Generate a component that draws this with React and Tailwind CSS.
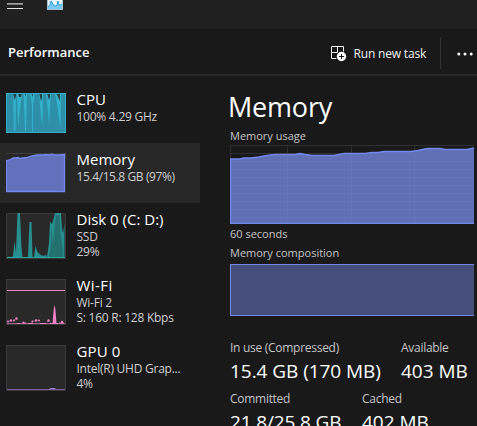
import React from "react";

function CpuGraph() {
  return (
    <svg width="60" height="40" viewBox="0 0 60 40" className="block">
      <rect width="60" height="40" fill="#2e90a8" />
      <path d="M7 0H10L9.500 38H8ZM11 0H16L13.500 20L12.500 34L11.500 20ZM17.500 0H21L20 38H19ZM24 0H29L27 12V39H26V12ZM33 0H37L36.500 34L35 24ZM40 0H45L43 31L42 20ZM49 0H55L54.500 36L53 26L51.500 14Z" fill="#33b0cb" />
      <path d="M7 0H10V3L8.500 7ZM12 0H16L15 4H13ZM18 0H20V3ZM25 0H27V4ZM33 0H36V5L35 8ZM41 0H44V4L43 7ZM50 0H54V8L52 4Z" fill="#24424a" />
      <rect x=".5" y=".5" width="59" height="39" fill="none" stroke="#35acc6" />
    </svg>
  );
}

function MemoryGraph() {
  return (
    <svg width="60" height="40" viewBox="0 0 60 40" className="block">
      <path d="M0 .5H59.500V5" fill="none" stroke="#3c3c3c" />
      <path d="M.5 38.500V7.500L4 7L7 5H10L12 4.500L14 5.500L17 5L21 4.500L26 3L31 2H38L40 1.500L43 2L46 1L48 2H53L58.500 1.500V38.500Z" fill="#6370bb" stroke="#7389f2" strokeWidth="1.300" />
    </svg>
  );
}

function DiskGraph() {
  return (
    <svg width="60" height="46" viewBox="0 0 60 46" className="block">
      <rect x=".5" y=".5" width="59" height="45" fill="#292929" stroke="#3a3a3a" />
      <path d="M1 45L3 43.500L5 44.500L7 43L8.500 28L10 40L11.500 0H14L15.500 35L16.500 44H22L23.500 9H25.500L26.500 44H28L29.500 33L31.500 39L35 42L38 43L40 41.500L41 44L43 30L44 9L46 11L48 4L49 0H55L56 16L57 20L58.500 10V45Z" fill="#25908f" />
      <path d="M43 44L45 30L45.500 14L47 32L49 8L50 2H53.500L54.500 20L57 38V44Z" fill="#24726f" />
      <path d="M1 44.500H59" stroke="#25a09d" />
    </svg>
  );
}

function WifiGraph() {
  return (
    <svg width="60" height="46" viewBox="0 0 60 46" className="block">
      <rect x=".5" y=".5" width="59" height="45" fill="#292929" stroke="#3a3a3a" />
      <path d="M1 11.500H59" stroke="#ee82c6" />
      <path d="M46.500 45L47.800 29L48.500 26L49.500 31L50.500 45Z" fill="#ee82c6" />
      <path d="M1 44.500H59" stroke="#a45c8a" />
      <path d="M11 44.500H14M16 44H20M22 44.500H27M34 44.500H40M44 44.500H52M53 44H58" fill="none" stroke="#ee82c6" />
      <path d="M1 42.500L5 41.500L9 41L10 39M25 43L29 41.500L33 41M41 43L43 41.500L45 44" fill="none" stroke="#a45c8a" strokeDasharray="1 1" />
      <g fill="#ee82c6">
        <circle cx="2" cy="42.500" r="1" />
        <circle cx="5" cy="41.500" r="1.200" />
        <circle cx="8" cy="41.500" r="1" />
        <circle cx="10.500" cy="39.500" r="1.200" />
        <circle cx="17.500" cy="43.500" r="1" />
        <circle cx="26.500" cy="42.500" r="1" />
        <circle cx="30" cy="41.500" r="1.200" />
        <circle cx="33" cy="41.500" r="1" />
        <circle cx="42.500" cy="41.500" r="1.200" />
        <circle cx="56" cy="43" r="1.200" />
      </g>
    </svg>
  );
}

function GpuGraph() {
  return (
    <svg width="60" height="46" viewBox="0 0 60 46" className="block">
      <rect x=".5" y=".5" width="59" height="45" fill="#292929" stroke="#3a3a3a" />
      <path d="M1 44.500H59" stroke="#7a5f9c" />
      <path d="M43 44.500L45 43.500H49L50 44.500" stroke="#a581d0" fill="none" />
    </svg>
  );
}

function Item({ graph, title, lines, selected, tall, titleClass = "", lineClass = "tracking-[-0.25px]" }) {
  return (
    <div className={`flex gap-[10.5px] pl-1.5 ${tall ? "h-[66px]" : "h-[60px]"} ${selected ? "bg-[#272727]" : ""}`}>
      <div className="shrink-0 pt-2.5">{graph}</div>
      <div className="whitespace-nowrap pt-1.5">
        <div className={`text-[15px] leading-5 text-white ${titleClass}`}>{title}</div>
        {lines.map((l) => (
          <div key={l} className={`text-[12px] leading-[15px] text-[#cfcfcf] ${lineClass}`}>{l}</div>
        ))}
      </div>
    </div>
  );
}

function Stat({ label, value, className = "", valueClass = "" }) {
  return (
    <div className={`shrink-0 whitespace-nowrap ${className}`}>
      <div className="text-[12px] leading-[15px] tracking-[-0.28px] text-[#c4c4c4]">{label}</div>
      <div className={`mt-[3px] text-[19px] leading-[26px] text-white ${valueClass}`}>{value}</div>
    </div>
  );
}

export default function App() {
  return (
    <div className="flex h-[426px] w-[477px] flex-col overflow-hidden bg-[#191919] font-['Open_Sans','Noto_Sans',sans-serif]">
      <header className="flex h-[29px] shrink-0 items-start bg-[#202020] pl-[7px]">
        <svg width="16" height="10" viewBox="0 0 16 10">
          <path d="M0 3.500H16" stroke="#a0a0a0" />
          <path d="M0 4.500H16" stroke="#777" />
          <path d="M0 8.500H16" stroke="#e4e4e4" />
        </svg>
        <svg width="16" height="10" viewBox="0 0 16 10" className="ml-6">
          <rect width="16" height="10" fill="#a9c3d2" />
          <rect x="1" width="14" height="9" fill="#e9f6fd" />
          <path d="M1 7L3 5L4 1L5 2L6 5L8 6L10 5.500L11 1L12 5L14 5L15 4V9H1Z" fill="#7cc9f6" />
          <path d="M1 7L3 5L4 1L5 2L6 5L8 6L10 5.500L11 1L12 5L14 5L15 4" fill="none" stroke="#2d9fdc" />
        </svg>
      </header>
      <div className="flex h-[47px] shrink-0 items-start border-b-2 border-[#2a2a2a] pl-2">
        <h1 className="mt-3.5 w-[323px] shrink-0 text-[13px] font-semibold leading-[18px] text-white">Performance</h1>
        <svg width="16" height="16" viewBox="0 0 16 16" className="mt-[17px] shrink-0">
          <path d="M.5 .5H12.500V12.500H.5ZM6.500 .5V12.500M.5 6.500H12.500" fill="none" stroke="#f2f2f2" />
          <circle cx="10.500" cy="10.500" r="5.500" fill="#191919" />
          <circle cx="10.500" cy="10.500" r="4.700" fill="#fff" />
          <path d="M10.500 8V13M8 10.500H13" stroke="#191919" />
        </svg>
        <span className="ml-[6.5px] mt-4 w-[86.5px] shrink-0 whitespace-nowrap text-[12px] font-medium leading-[17px] tracking-[-0.18px] text-[#f2f2f2]">Run new task</span>
        <div className="mt-2 h-8 w-px shrink-0 bg-[#343434]" />
        <svg width="17" height="4" viewBox="0 0 17 4" className="ml-4 mt-[23px] shrink-0">
          <circle cx="1.800" cy="2" r="1.500" fill="#fff" />
          <circle cx="8" cy="2" r="1.500" fill="#fff" />
          <circle cx="14.200" cy="2" r="1.500" fill="#fff" />
        </svg>
      </div>
      <div className="flex flex-1">
        <nav className="w-[200px] shrink-0 pt-[7px]">
          <Item graph={<CpuGraph />} title="CPU" lines={["100% 4.29 GHz"]} />
          <Item selected graph={<MemoryGraph />} title="Memory" lines={["15.4/15.8 GB (97%)"]} lineClass="tracking-[-0.4px]" />
          <Item tall graph={<DiskGraph />} title="Disk 0 (C: D:)" lines={["SSD", "29%"]} />
          <Item tall graph={<WifiGraph />} title="Wi-Fi" lines={["Wi-Fi 2", "S: 160 R: 128 Kbps"]} titleClass="tracking-[0.45px]" />
          <Item tall graph={<GpuGraph />} title="GPU 0" lines={["Intel(R) UHD Grap...", "4%"]} titleClass="tracking-[0.1px]" />
        </nav>
        <main className="w-[274px] shrink-0 pl-[30px] pt-[13px]">
          <h2 className="-ml-0.5 text-[27px] leading-[35px] tracking-[-0.2px] text-white">Memory</h2>
          <div className="mt-1 text-[11px] leading-[15px] text-[#c4c4c4]">Memory usage</div>
          <svg width="244" height="79" viewBox="0 0 244 79" className="mt-0.5 block">
            <path d="M0 .5H244M0 8.500H244M.5 0V79M57.500 0V79M121.500 0V79M184.500 0V79" stroke="#2f2f31" fill="none" />
            <path d="M.5 78V14H10L14 13H21L29 12L37 10.500L45 9.500H65L70 8.500L75 9.500L82 10.500H104L114 8.500H135L142 7.500H148L154 6.500H181L188 5.500L197 3.500H210L215 4.500H237L244 3V78Z" fill="#606fb6" />
            <path d="M1 16.500H244M1 24.500H244M1 32.500H244M1 40.500H244M1 48.500H244M1 56.500H244M1 64.500H244M1 72.500H244M57.500 10V78M121.500 10V78M184.500 8V78" stroke="#6875bf" strokeWidth=".8" fill="none" />
            <path d="M244 3L237 4.500H215L210 3.500H197L188 5.500L181 6.500H154L148 7.500H142L135 8.500H114L104 10.500H82L75 9.500L70 8.500L65 9.500H45L37 10.500L29 12L21 13H14L10 14H.5V78.500H244" fill="none" stroke="#7389f2" strokeWidth="1.400" />
          </svg>
          <div className="mt-0.5 text-[11px] leading-[15px] text-[#c4c4c4]">60 seconds</div>
          <div className="mt-1 text-[11px] leading-[15px] text-[#c4c4c4]">Memory composition</div>
          <div className="mt-1 h-[52px] border border-r-0 border-[#7389f2] bg-[#464f7b]" />
          <div className="mt-6 flex">
            <Stat label="In use (Compressed)" value="15.4 GB (170 MB)" className="w-[171px]" valueClass="tracking-[-0.05px]" />
            <Stat label="Available" value="403 MB" />
          </div>
          <div className="mt-[7px] flex">
            <Stat label="Committed" value="21.8/25.8 GB" className="w-[132px]" valueClass="tracking-[-0.15px]" />
            <Stat label="Cached" value="402 MB" />
          </div>
        </main>
      </div>
    </div>
  );
}
